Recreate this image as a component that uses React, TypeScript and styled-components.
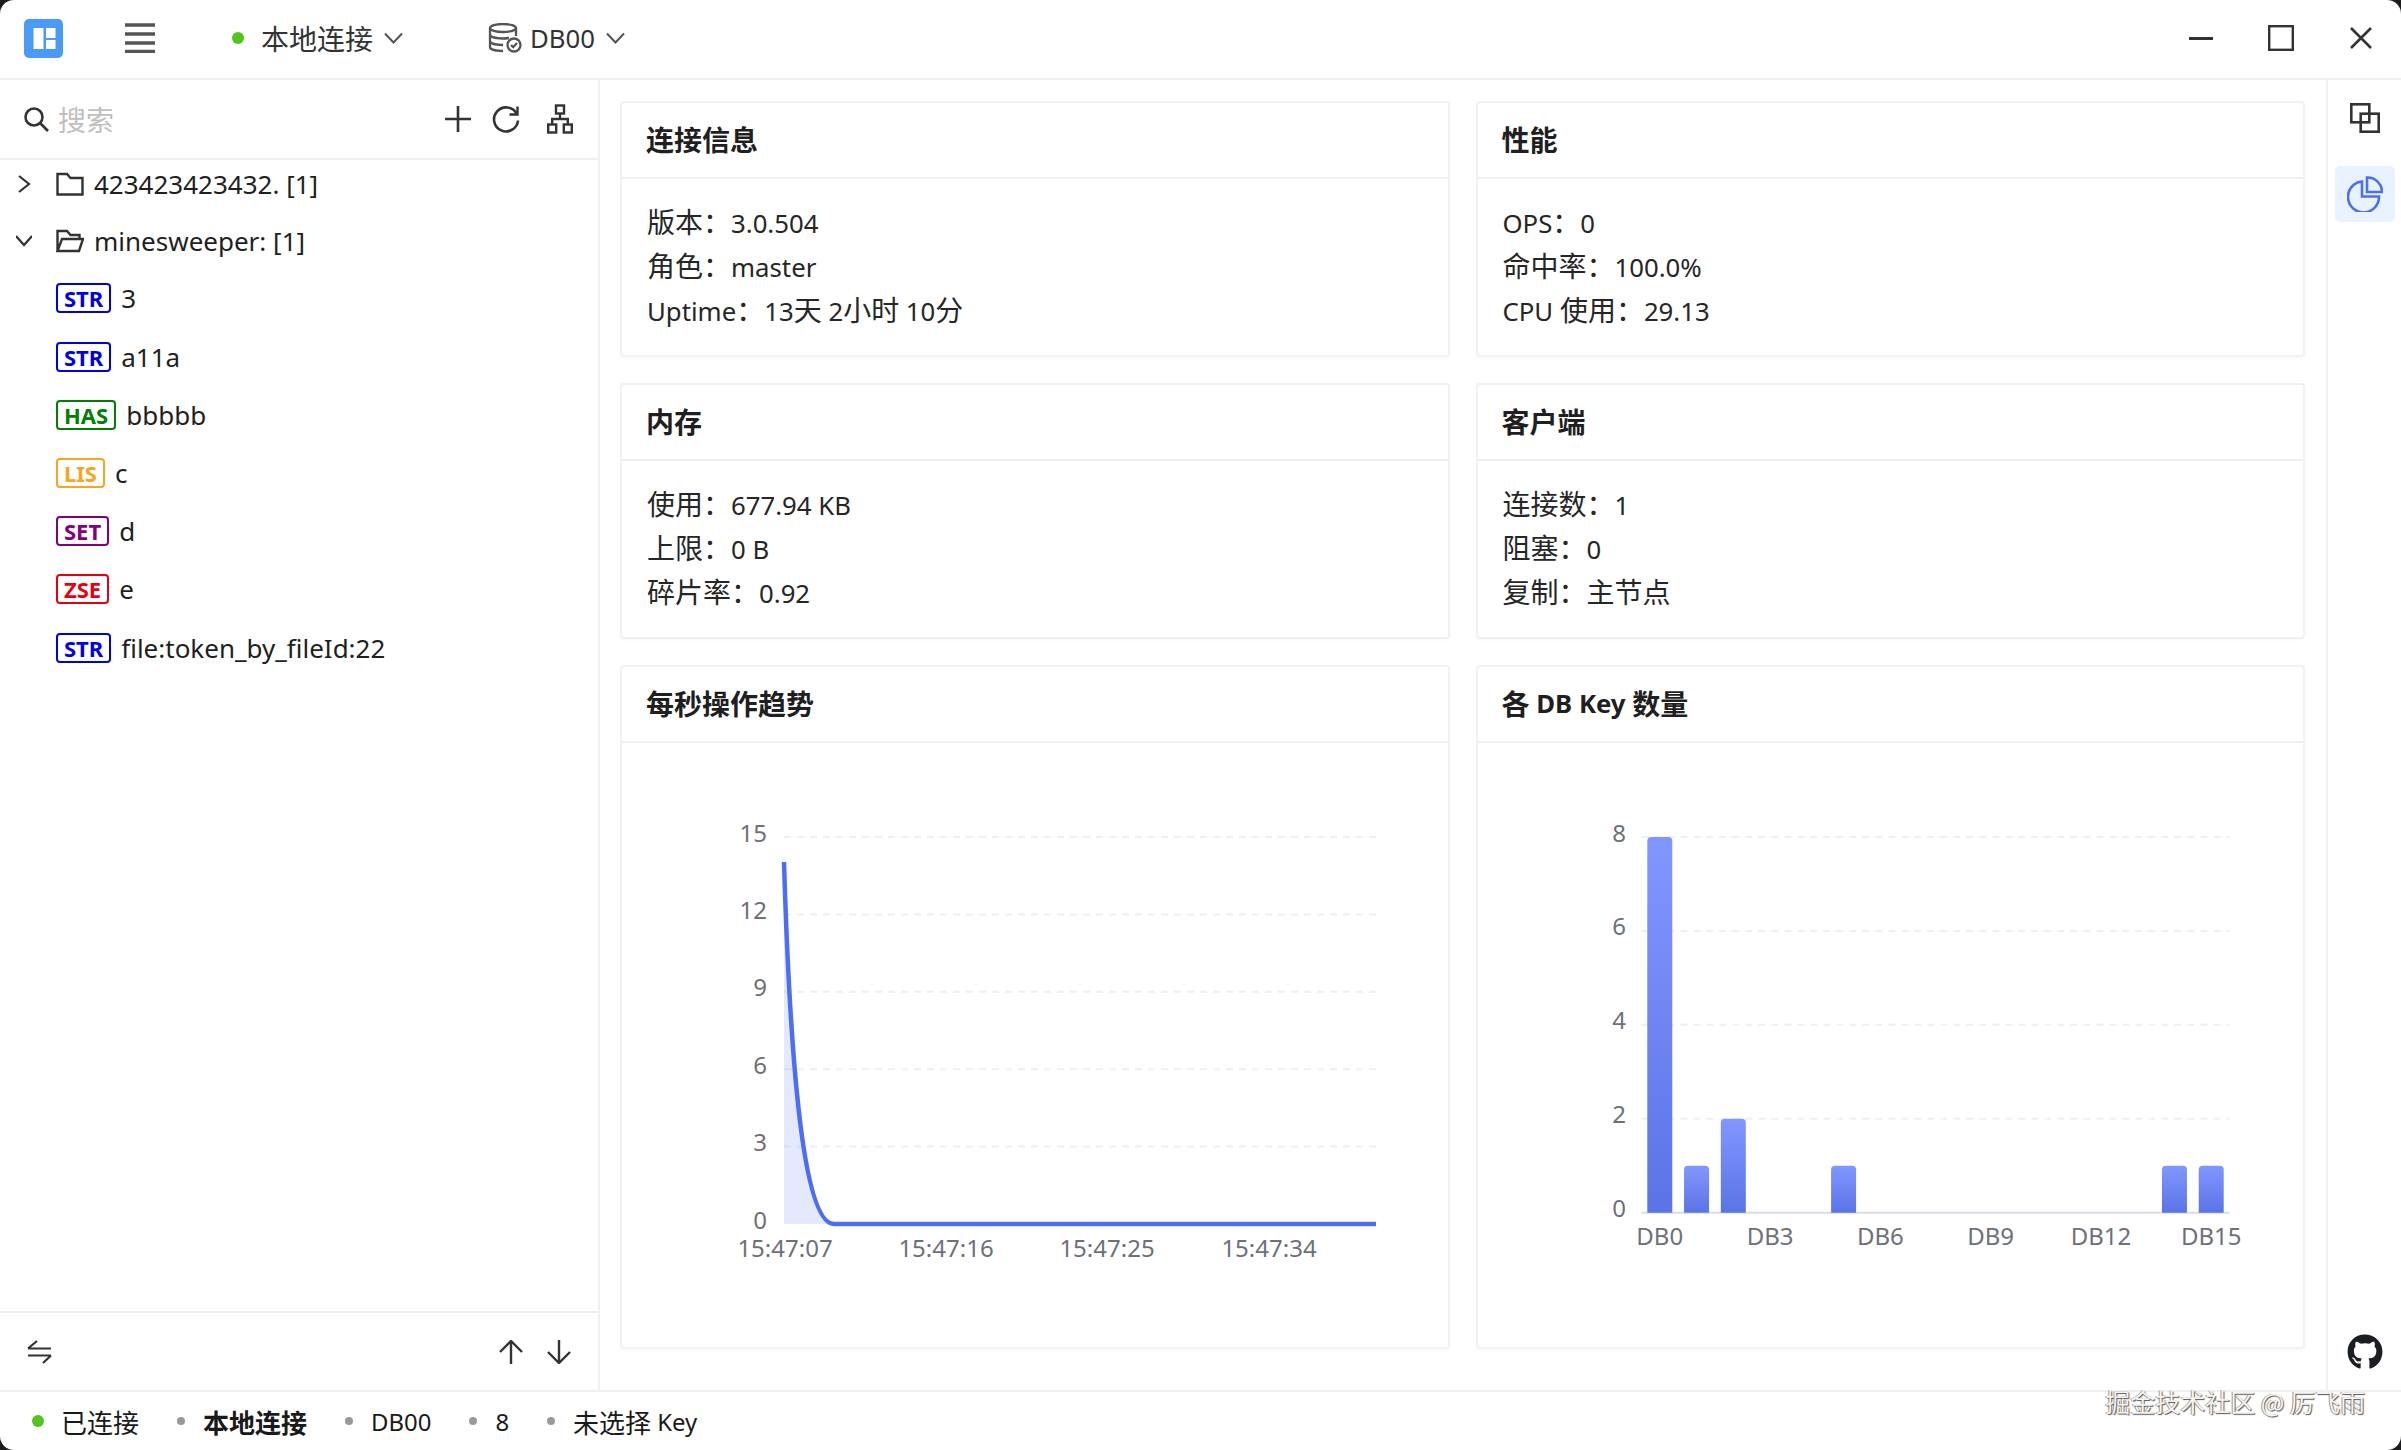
import { Fragment } from "react";
import styled, { createGlobalStyle } from "styled-components";
import { FaGithub } from "react-icons/fa";

const FONT = `"Noto Sans", "Noto Sans CJK SC", sans-serif`;
const CJK = `"Noto Sans CJK SC", "Noto Sans", sans-serif`;
const LINE = "#f0f0f0";

const GlobalStyle = createGlobalStyle`
  html, body {
    margin: 0;
    padding: 0;
    background: #1c1c1e;
    overflow: hidden;
  }
  * { box-sizing: border-box; }
`;

const Shell = styled.div`
  position: relative;
  width: 2401px;
  height: 1450px;
  display: flex;
  flex-direction: column;
  background: #fff;
  border-radius: 14px;
  overflow: hidden;
  font-family: ${CJK};
  font-size: 28px;
  color: #1f1f1f;
`;

// latin runs sit a little smaller than the chinese text around them
const Latin = styled.span`
  font-family: ${FONT};
  font-size: 0.92em;
`;

const mixed = (text: string) =>
  text.split(/([\u0000-\u2fff]+)/).map((part, i) =>
    /^[\u0000-\u2fff]+$/.test(part) ? <Latin key={i}>{part}</Latin> : <Fragment key={i}>{part}</Fragment>,
  );

/* ---------- title bar ---------- */
const TitleBar = styled.header`
  height: 80px;
  flex: none;
  display: flex;
  align-items: center;
  padding: 0 0 2px 24px;
  border-bottom: 2px solid ${LINE};
`;

const Logo = styled.svg`
  width: 39px;
  height: 39px;
  flex: none;
`;

const MenuIcon = styled.svg`
  width: 30px;
  height: 30px;
  margin-left: 62px;
  flex: none;
`;

const Picker = styled.div<{ $offset: number }>`
  display: flex;
  align-items: center;
  margin-left: ${(p) => p.$offset}px;
  color: #333;
`;

const StatusDot = styled.span<{ $gap: number }>`
  width: 12px;
  height: 12px;
  flex: none;
  border-radius: 50%;
  background: #52c41a;
  margin-right: ${(p) => p.$gap}px;
`;

const PickerChevron = styled.svg`
  width: 19px;
  height: 12px;
  margin-left: 11px;
  flex: none;
`;

const DbIcon = styled.svg`
  width: 34px;
  height: 30px;
  margin-right: 8px;
  flex: none;
`;

const WindowControls = styled.div`
  margin-left: auto;
  display: flex;
`;

const WindowButton = styled.div`
  width: 80px;
  height: 40px;
  display: flex;
  align-items: center;
  justify-content: center;
`;

/* ---------- body ---------- */
const Body = styled.div`
  flex: 1;
  min-height: 0;
  display: flex;
`;

const Sidebar = styled.aside`
  width: 600px;
  flex: none;
  display: flex;
  flex-direction: column;
  border-right: 2px solid ${LINE};
`;

const SearchRow = styled.div`
  height: 80px;
  flex: none;
  display: flex;
  align-items: center;
  padding-left: 24px;
  border-bottom: 2px solid ${LINE};
`;

const SearchInput = styled.input`
  flex: 1;
  min-width: 0;
  margin-left: 9px;
  border: 0;
  outline: 0;
  padding: 0;
  background: transparent;
  font-family: ${CJK};
  font-size: 28px;
  &::placeholder { color: #bfbfbf; }
`;

const SearchTools = styled.div`
  display: flex;
  align-items: center;
  gap: 21px;
  padding-right: 25px;
  & > svg:last-child { margin-left: 6px; }
`;

const Tree = styled.div`
  flex: 1;
  min-height: 0;
  font-family: ${FONT};
  font-size: 26px;
`;

const TreeRow = styled.div<{ $leaf?: boolean }>`
  height: 50px;
  margin-bottom: ${(p) => (p.$leaf ? 8.2 : 6.7)}px;
  display: flex;
  align-items: center;
  padding: ${(p) => (p.$leaf ? "0 0 0 56px" : "0 0 2px 16px")};
`;

const Caret = styled.svg`
  width: 16px;
  height: 22px;
  flex: none;
`;

const FolderIcon = styled.svg`
  width: 28px;
  height: 24px;
  margin: 0 10px 0 24px;
  flex: none;
`;

const TypeBadge = styled.span<{ $color: string }>`
  height: 30px;
  flex: none;
  display: inline-flex;
  align-items: center;
  padding: 0 6px;
  margin-right: 10px;
  border: 2px solid ${(p) => p.$color};
  border-radius: 4px;
  color: ${(p) => p.$color};
  font-size: 22px;
  font-weight: 700;
  line-height: 1;
`;

const SidebarFoot = styled.div`
  height: 79px;
  flex: none;
  display: flex;
  align-items: center;
  justify-content: space-between;
  padding: 0 27px 0 27px;
  border-top: 2px solid ${LINE};
`;

const ArrowGroup = styled.div`
  display: flex;
  gap: 24px;
`;

/* ---------- dashboard ---------- */
const Dashboard = styled.main`
  flex: 1;
  min-width: 0;
  display: grid;
  grid-template-columns: 1fr 1fr;
  grid-template-rows: 256px 256px 684px;
  gap: 26px;
  padding: 21px 21px 0 20px;
`;

const Card = styled.section`
  display: flex;
  flex-direction: column;
  border: 2px solid #f2f2f2;
  border-radius: 4px;
  box-shadow: 0 1px 3px rgba(0, 0, 0, 0.03);
  min-height: 0;
`;

const CardTitle = styled.h3`
  height: 76px;
  flex: none;
  margin: 0;
  display: flex;
  align-items: center;
  white-space: pre;
  padding: 0 24px 2px;
  border-bottom: 2px solid ${LINE};
  font-size: 28px;
  font-weight: 700;
  color: #1f1f1f;
`;

const CardLines = styled.div`
  padding: 19.5px 25px 0;
  color: #262626;
`;

const CardLine = styled.div`
  height: 44.4px;
  line-height: 44.4px;
  white-space: pre;
`;

const ChartSvg = styled.svg`
  display: block;
  width: 825px;
  height: 604px;
`;

const AxisText = styled.text<{ $anchor?: string }>`
  font-family: ${FONT};
  font-size: 24px;
  fill: #6e7079;
  text-anchor: ${(p) => p.$anchor ?? "middle"};
  dominant-baseline: central;
`;

/* ---------- right rail ---------- */
const Rail = styled.nav`
  width: 75px;
  flex: none;
  display: flex;
  flex-direction: column;
  align-items: center;
  gap: 20px;
  padding: 10px 0 20px;
  border-left: 2px solid ${LINE};
`;

const RailButton = styled.div<{ $active?: boolean }>`
  width: 60px;
  height: 56px;
  display: flex;
  align-items: center;
  justify-content: center;
  border-radius: 5px;
  background: ${(p) => (p.$active ? "#e8f3ff" : "transparent")};
`;

const GithubLink = styled.div`
  margin-top: auto;
  display: flex;
  color: #1b1f23;
`;

/* ---------- status bar ---------- */
const StatusBar = styled.footer`
  height: 60px;
  flex: none;
  display: flex;
  align-items: center;
  white-space: pre;
  padding: 0 0 0 32px;
  border-top: 2px solid ${LINE};
  font-size: 26px;
  color: #1a1a1a;
`;

const StatusSep = styled.span`
  width: 8px;
  height: 8px;
  flex: none;
  border-radius: 50%;
  background: #999;
  margin: 0 18px 0 38px;
`;

const StatusStrong = styled.span`
  font-weight: 700;
`;

const Watermark = styled.div`
  position: absolute;
  right: 36px;
  bottom: 34px;
  font-size: 25px;
  line-height: 30px;
  color: #f4f4f4;
  text-shadow: 1px 1px 1px #555, -1px 0 0 #9a9a9a;
  white-space: nowrap;
`;

/* ---------- icons ---------- */
const Chevron = () => (
  <PickerChevron viewBox="0 0 19 12" fill="none" stroke="#555" strokeWidth="2">
    <path d="M1 1.5 9.5 10.5 18 1.5" />
  </PickerChevron>
);

const ToolPlus = () => (
  <svg width="26" height="26" viewBox="0 0 26 26" stroke="#333" strokeWidth="2.6">
    <path d="M0 13h26M13 0v26" />
  </svg>
);

const ToolRefresh = () => (
  <svg width="28" height="28" viewBox="0 0 28 28" fill="none" stroke="#333" strokeWidth="2.6">
    <path d="M24.5 8.5A12 12 0 1 0 26 15.5" />
    <path d="M25.5 1.5V9.5H17.5" strokeWidth="2.4" />
  </svg>
);

const ToolTree = () => (
  <svg width="26" height="30" viewBox="0 0 26 30" fill="none" stroke="#333" strokeWidth="2.4">
    <rect x="9" y="1.5" width="8" height="8" />
    <rect x="1.2" y="20.5" width="8" height="8" />
    <rect x="16.8" y="20.5" width="8" height="8" />
    <path d="M13 9.5V15M5.2 20.5V15H20.8V20.5" />
  </svg>
);

const ClosedFolder = () => (
  <FolderIcon viewBox="0 0 28 24" fill="none" stroke="#333" strokeWidth="2.4">
    <path d="M1.5 2h9.5l3.5 4h12v16.5h-25z" />
  </FolderIcon>
);

const OpenFolder = () => (
  <FolderIcon viewBox="0 0 28 24" fill="none" stroke="#333" strokeWidth="2.4">
    <path d="M1.5 22V2h9.5l3.5 4h9V10M1.5 22h21.5L27 10H6z" />
  </FolderIcon>
);

/* ---------- charts ---------- */
const lineGrid = [15, 12, 9, 6, 3, 0];
const LINE_PLOT = { left: 162, right: 754, top: 94, base: 481 };
const lineCurve = "M162 119 C169 351 184 481 212 481 L754 481";
const lineTimes = [
  { x: 163, label: "15:47:07" },
  { x: 324, label: "15:47:16" },
  { x: 485, label: "15:47:25" },
  { x: 647, label: "15:47:34" },
];

const TrendChart = () => {
  const { left, right, top, base } = LINE_PLOT;
  const step = (base - top) / 5;
  return (
    <ChartSvg viewBox="0 0 825 604">
      {lineGrid.map((v, i) => {
        const y = top + step * i;
        return (
          <g key={v}>
            {v !== 0 && (
              <line x1={left} x2={right} y1={y} y2={y} stroke="#eef0f3" strokeWidth="2" strokeDasharray="7 6" />
            )}
            <AxisText x={145} y={y - 5} $anchor="end">
              {v}
            </AxisText>
          </g>
        );
      })}
      <path d={`${lineCurve} L${left} ${base} Z`} fill="#4e6ef2" fillOpacity="0.15" stroke="none" />
      <path d={lineCurve} fill="none" stroke="#4e6ef2" strokeWidth="4.5" />
      {lineTimes.map((t) => (
        <AxisText key={t.label} x={t.x} y={504}>
          {t.label}
        </AxisText>
      ))}
    </ChartSvg>
  );
};

const dbCounts = [8, 1, 2, 0, 0, 1, 0, 0, 0, 0, 0, 0, 0, 0, 1, 1];
const BAR_PLOT = { left: 163.4, right: 751.6, top: 94, base: 469.7 };

const KeysChart = () => {
  const { left, right, top, base } = BAR_PLOT;
  const unit = (base - top) / 8;
  const band = (right - left) / 16;
  return (
    <ChartSvg viewBox="0 0 825 604">
      <defs>
        <linearGradient id="barFill" x1="0" y1="0" x2="0" y2="1">
          <stop offset="0" stopColor="#8296ff" />
          <stop offset="1" stopColor="#5a74e6" />
        </linearGradient>
      </defs>
      {[8, 6, 4, 2].map((v) => (
        <line
          key={v}
          x1={left}
          x2={right}
          y1={base - v * unit}
          y2={base - v * unit}
          stroke="#eef0f3"
          strokeWidth="2"
          strokeDasharray="7 6"
        />
      ))}
      <line x1={left} x2={right} y1={base} y2={base} stroke="#d9dde8" strokeWidth="2" />
      {[8, 6, 4, 2, 0].map((v) => (
        <AxisText key={v} x={148} y={base - v * unit - 5} $anchor="end">
          {v}
        </AxisText>
      ))}
      {dbCounts.map((n, i) => {
        if (!n) return null;
        const x = left + band * i + band / 2 - 12.5;
        const y = base - n * unit;
        return (
          <path
            key={i}
            d={`M${x} ${base}V${y + 4}Q${x} ${y} ${x + 4} ${y}H${x + 21}Q${x + 25} ${y} ${x + 25} ${y + 4}V${base}Z`}
            fill="url(#barFill)"
          />
        );
      })}
      {[0, 3, 6, 9, 12, 15].map((db) => (
        <AxisText key={db} x={left + band * db + band / 2} y={492}>
          {`DB${db}`}
        </AxisText>
      ))}
    </ChartSvg>
  );
};

const leaves = [
  { type: "STR", color: "#0000e0", name: "3" },
  { type: "STR", color: "#0000e0", name: "a11a" },
  { type: "HAS", color: "#008000", name: "bbbbb" },
  { type: "LIS", color: "#f5a623", name: "c" },
  { type: "SET", color: "#800080", name: "d" },
  { type: "ZSE", color: "#e60012", name: "e" },
  { type: "STR", color: "#0000e0", name: "file:token_by_fileId:22" },
];

const infoCards = [
  { title: "连接信息", lines: ["版本\uff1a3.0.504", "角色\uff1amaster", "Uptime\uff1a13天 2小时 10分"] },
  { title: "性能", lines: ["OPS\uff1a0", "命中率\uff1a100.0%", "CPU 使用\uff1a29.13"] },
  { title: "内存", lines: ["使用\uff1a677.94 KB", "上限\uff1a0 B", "碎片率\uff1a0.92"] },
  { title: "客户端", lines: ["连接数\uff1a1", "阻塞\uff1a0", "复制\uff1a主节点"] },
];

export default function App() {
  return (
    <>
      <GlobalStyle />
      <Shell>
        <TitleBar>
          <Logo viewBox="0 0 39 39">
            <rect width="39" height="39" rx="5" fill="#4a9bf6" />
            <path d="M9.500 9h10v21h-10zM22 9h9.500v10H22zM22 21h9.500v9H22z" fill="#fff" />
          </Logo>
          <MenuIcon viewBox="0 0 30 30" stroke="#555" strokeWidth="3.5">
            <path d="M0 2h30M0 11h30M0 20h30M0 28.500h30" />
          </MenuIcon>
          <Picker $offset={77}>
            <StatusDot $gap={17} />
            本地连接
            <Chevron />
          </Picker>
          <Picker $offset={85}>
            <DbIcon viewBox="0 0 34 30" fill="none" stroke="#555" strokeWidth="2.3">
              <ellipse cx="15" cy="5" rx="13" ry="4" />
              <path d="M2 5v19c0 2.500 6 4 13 4M2 11.500c0 2.500 6 4 13 4 2 0 4-.2 6-.5M2 18c0 2.500 6 4 13 4M28 5v8" />
              <circle cx="26" cy="22" r="6.500" />
              <path d="M23 22l2.200 2.200L29 20" />
            </DbIcon>
            <Latin>DB00</Latin>
            <Chevron />
          </Picker>
          <WindowControls>
            <WindowButton>
              <svg width="24" height="3" viewBox="0 0 24 3">
                <rect width="24" height="3" fill="#333" />
              </svg>
            </WindowButton>
            <WindowButton>
              <svg width="26" height="26" viewBox="0 0 26 26" fill="none" stroke="#333" strokeWidth="2.4">
                <rect x="1.200" y="1.200" width="23.600" height="23.600" />
              </svg>
            </WindowButton>
            <WindowButton>
              <svg width="22" height="22" viewBox="0 0 22 22" stroke="#333" strokeWidth="2.6">
                <path d="M1 1l20 20M21 1L1 21" />
              </svg>
            </WindowButton>
          </WindowControls>
        </TitleBar>

        <Body>
          <Sidebar>
            <SearchRow>
              <svg width="25" height="25" viewBox="0 0 25 25" fill="none" stroke="#333" strokeWidth="2.6">
                <circle cx="10" cy="10" r="8.500" />
                <path d="M16 16l8 8" />
              </svg>
              <SearchInput placeholder="搜索" />
              <SearchTools>
                <ToolPlus />
                <ToolRefresh />
                <ToolTree />
              </SearchTools>
            </SearchRow>
            <Tree>
              <TreeRow>
                <Caret viewBox="0 0 16 22" fill="none" stroke="#333" strokeWidth="2.2">
                  <path d="M3 3l10 8-10 8" />
                </Caret>
                <ClosedFolder />
                423423423432. [1]
              </TreeRow>
              <TreeRow>
                <Caret viewBox="0 0 16 22" fill="none" stroke="#333" strokeWidth="2.2">
                  <path d="M0 6l8 9 8-9" />
                </Caret>
                <OpenFolder />
                minesweeper: [1]
              </TreeRow>
              {leaves.map((leaf) => (
                <TreeRow $leaf key={leaf.type + leaf.name}>
                  <TypeBadge $color={leaf.color}>{leaf.type}</TypeBadge>
                  {leaf.name}
                </TreeRow>
              ))}
            </Tree>
            <SidebarFoot>
              <svg width="25" height="24" viewBox="0 0 25 24" fill="none" stroke="#333" strokeWidth="2.2">
                <path d="M1 8.500h23M1 8.500L10 1M24 15.500H1M24 15.500L16 23" />
              </svg>
              <ArrowGroup>
                <svg width="24" height="24" viewBox="0 0 24 24" fill="none" stroke="#333" strokeWidth="2.4">
                  <path d="M12 24V1M1 12L12 1l11 11" />
                </svg>
                <svg width="24" height="24" viewBox="0 0 24 24" fill="none" stroke="#333" strokeWidth="2.4">
                  <path d="M12 0v23M1 12l11 11 11-11" />
                </svg>
              </ArrowGroup>
            </SidebarFoot>
          </Sidebar>

          <Dashboard>
            {infoCards.map((card) => (
              <Card key={card.title}>
                <CardTitle>{card.title}</CardTitle>
                <CardLines>
                  {card.lines.map((line) => (
                    <CardLine key={line}>{mixed(line)}</CardLine>
                  ))}
                </CardLines>
              </Card>
            ))}
            <Card>
              <CardTitle>每秒操作趋势</CardTitle>
              <TrendChart />
            </Card>
            <Card>
              <CardTitle>{mixed("各 DB Key 数量")}</CardTitle>
              <KeysChart />
            </Card>
          </Dashboard>

          <Rail>
            <RailButton>
              <svg width="30" height="30" viewBox="0 0 30 30" fill="none" stroke="#333" strokeWidth="2.6">
                <rect x="1.300" y="1.300" width="18" height="18" />
                <rect x="10.700" y="10.700" width="18" height="18" />
              </svg>
            </RailButton>
            <RailButton $active>
              <svg width="36" height="36" viewBox="0 0 36 36" fill="none" stroke="#4e6ef2" strokeWidth="2.6">
                <path d="M15 5.500A15.500 15.500 0 1 0 32 20.500H15z" />
                <path d="M20 1.500a14.500 14.500 0 0 1 15 14.500H20z" />
              </svg>
            </RailButton>
            <GithubLink>
              <FaGithub size={36} />
            </GithubLink>
          </Rail>
        </Body>

        <StatusBar>
          <StatusDot $gap={17} />
          已连接
          <StatusSep />
          <StatusStrong>本地连接</StatusStrong>
          <StatusSep />
          <Latin>DB00</Latin>
          <StatusSep />
          <Latin>8</Latin>
          <StatusSep />
          {mixed("未选择 Key")}
        </StatusBar>
        <Watermark>掘金技术社区 @ 厉飞雨</Watermark>
      </Shell>
    </>
  );
}
